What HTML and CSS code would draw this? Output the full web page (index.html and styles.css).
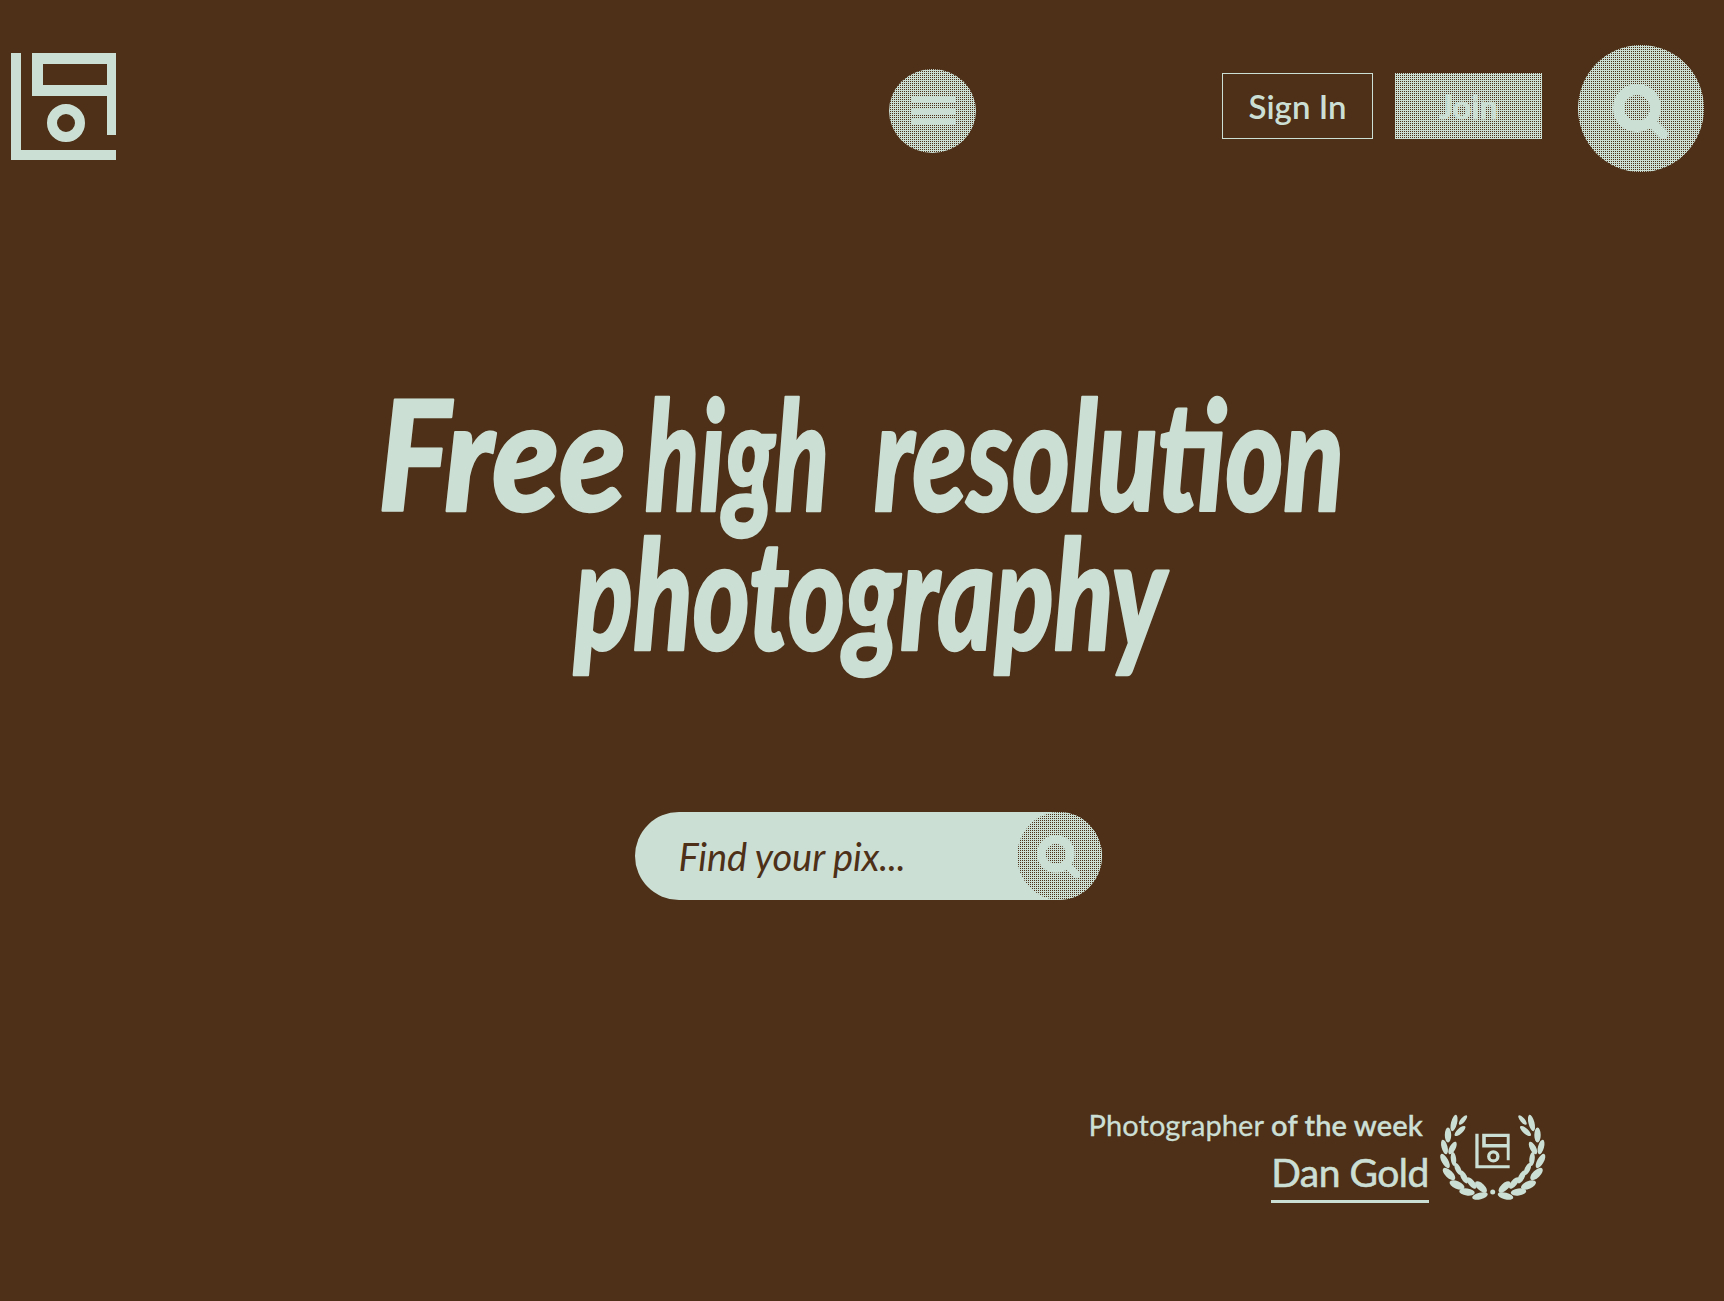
FILE: index.html
```html
<!DOCTYPE html>
<html lang="en">
<head>
<meta charset="utf-8">
<title>Free high resolution photography</title>
<link rel="stylesheet" href="styles.css">
</head>
<body>
<svg class="defs" aria-hidden="true">
  <symbol id="logo" viewBox="0 0 105 107">
    <path d="M0 0h10v97h95v10H0zM21 0h84v82h-9V43H21zM32 11v21h64V11z" fill-rule="evenodd"/>
    <circle cx="55" cy="70" r="14" fill="none" stroke="currentColor" stroke-width="10"/>
  </symbol>
  <symbol id="search" viewBox="0 0 56 56">
    <circle cx="24" cy="24" r="18.500" fill="none" stroke="currentColor" stroke-width="11"/>
    <path d="M39 39L50 50" stroke="currentColor" stroke-width="10" stroke-linecap="round"/>
  </symbol>
  <symbol id="branch" viewBox="0 0 46 84" overflow="visible">
    <ellipse cx="23" cy="5" rx="6" ry="2.200" transform="rotate(-50 23 5)"/>
    <ellipse cx="14" cy="8" rx="8.500" ry="3" transform="rotate(-76 14 8)"/>
    <ellipse cx="20" cy="16" rx="7" ry="2.700" transform="rotate(-42 20 16)"/>
    <ellipse cx="8" cy="20" rx="7.500" ry="3.200" transform="rotate(-90 8 20)"/>
    <ellipse cx="12.500" cy="33" rx="7" ry="3" transform="rotate(-62 12.500 33)"/>
    <ellipse cx="4.500" cy="32" rx="7.500" ry="3" transform="rotate(75 4.500 32)"/>
    <ellipse cx="13.500" cy="44" rx="7" ry="2.700" transform="rotate(84 13.500 44)"/>
    <ellipse cx="5" cy="46" rx="8" ry="3.300" transform="rotate(61 5 46)"/>
    <ellipse cx="18" cy="54" rx="6.500" ry="2.700" transform="rotate(65 18 54)"/>
    <ellipse cx="9" cy="59" rx="8" ry="3.700" transform="rotate(44 9 59)"/>
    <ellipse cx="24" cy="62" rx="7" ry="3" transform="rotate(63 24 62)"/>
    <ellipse cx="17" cy="70" rx="8" ry="3.800" transform="rotate(24 17 70)"/>
    <ellipse cx="31.500" cy="68" rx="7" ry="3" transform="rotate(50 31.500 68)"/>
    <ellipse cx="27" cy="77" rx="7.800" ry="3.500" transform="rotate(8 27 77)"/>
    <ellipse cx="41" cy="72" rx="7.500" ry="3.600" transform="rotate(44 41 72)"/>
    <ellipse cx="40" cy="81" rx="8" ry="3.300" transform="rotate(-14 40 81)"/>
  </symbol>
</svg>

<header class="topbar">
  <a class="logo" aria-label="Home"><svg><use href="#logo"/></svg></a>
  <button class="menu dither" aria-label="Menu"><span></span><span></span><span></span></button>
  <nav class="account">
    <a class="btn">Sign In</a>
    <a class="btn join dither">Join</a>
    <button class="search-round dither" aria-label="Search"><svg><use href="#search"/></svg></button>
  </nav>
</header>

<main class="hero">
  <h1 class="headline">
    <svg viewBox="0 0 1000 330">
      <text x="16" y="123" textLength="248" lengthAdjust="spacingAndGlyphs">Free</text>
      <text x="283" y="123" textLength="184" lengthAdjust="spacingAndGlyphs">high</text>
      <text x="512" y="123" textLength="470" lengthAdjust="spacingAndGlyphs">resolution</text>
      <text x="212" y="262" textLength="592" lengthAdjust="spacingAndGlyphs">photography</text>
    </svg>
  </h1>
  <form class="search">
    <span class="placeholder">Find your pix...</span>
    <button type="button" class="go dither" aria-label="Search"><svg><use href="#search"/></svg></button>
  </form>
</main>

<footer class="credit">
  <div class="who">
    <span class="label">Photographer <b>of the week</b></span>
    <a class="name">Dan Gold</a>
  </div>
  <svg class="award" viewBox="0 0 106 86">
    <use href="#branch" width="46" height="84"/>
    <use href="#branch" width="46" height="84" transform="translate(105.500 0) scale(-1 1)"/>
    <use href="#logo" x="35" y="18.500" width="35" height="35"/>
    <circle cx="52.700" cy="77" r="2.500"/>
  </svg>
</footer>
</body>
</html>
```
FILE: styles.css
```css
:root { --ink: #4d3017; --mint: #ccdfd5; }
* { box-sizing: border-box; }
body {
  margin: 0;
  height: 1301px;
  overflow: hidden;
  display: flex;
  flex-direction: column;
  background: var(--ink);
  color: var(--mint);
  fill: var(--mint);
  font-family: Lato, sans-serif;
}
.defs { position: absolute; width: 0; height: 0; }
button { border: 0; padding: 0; color: inherit; fill: inherit; }
svg { display: block; }
.dither {
  background: repeating-conic-gradient(var(--ink) 0 25%, var(--mint) 0 100%) 0 0 / 2px 2px;
}
.topbar { display: flex; align-items: flex-start; height: 180px; padding: 45px 20px 0 11px; }
.logo { margin-top: 8px; }
.logo svg { width: 105px; height: 107px; }
.menu {
  width: 87px; height: 84px;
  margin: 24px 0 0 773px;
  border-radius: 50%;
  display: flex; flex-direction: column; align-items: center;
  padding: 28px 0 0 1px; gap: 5px;
}
.menu span { width: 43px; height: 6px; background: var(--mint); }
.account { display: flex; margin-left: auto; }
.btn {
  width: 151px; height: 66px;
  margin: 28px 22px 0 0;
  border: 1px solid var(--mint);
  font-size: 33px; line-height: 64px; font-weight: 600;
  text-align: center;
}
.btn.join { width: 147px; margin-right: 36px; border: 0; line-height: 66px; -webkit-text-stroke: 0.8px; }
.search-round { width: 126px; height: 127px; border-radius: 50%; display: flex; }
.search-round svg { width: 56px; height: 56px; margin: 39px 0 0 35px; }
.hero { display: flex; flex-direction: column; align-items: center; padding-top: 208px; }
.headline { margin: 0; width: 1000px; height: 330px; }
.headline svg { width: 1000px; height: 330px; overflow: visible; }
.headline text { font: italic 900 152px Lato, sans-serif; stroke: var(--mint); stroke-width: 2.5px; stroke-linejoin: round; }
.search {
  width: 467px; height: 88px;
  margin: 94px 0 0 12px;
  border-radius: 44px;
  background: var(--mint);
  color: var(--ink);
  display: flex; justify-content: space-between;
  padding-left: 44px;
}
.placeholder { font-size: 38px; font-style: italic; line-height: 89px; letter-spacing: -0.1px; white-space: nowrap; }
.go { width: 85px; height: 88px; border-radius: 50%; color: var(--mint); display: flex; }
.go svg { width: 44px; height: 44px; margin: 23px 0 0 20px; }
.credit { display: flex; align-items: flex-start; justify-content: flex-end; margin-top: 215px; padding-right: 178px; }
.who { display: flex; flex-direction: column; align-items: flex-end; margin: -8px 11px 0 0; }
.label { font-size: 29px; line-height: 36px; margin-right: 6px; letter-spacing: 0.1px; white-space: nowrap; -webkit-text-stroke: 0.3px; }
.label b { font-weight: 600; }
.name {
  width: 158px;
  margin-top: 5px;
  padding-bottom: 4px;
  border-bottom: 3px solid var(--mint);
  font-size: 39px; line-height: 48px; letter-spacing: -0.5px;
  text-align: center; white-space: nowrap;
  -webkit-text-stroke: 0.6px;
}
.award { width: 106px; height: 86px; overflow: visible; }
```
